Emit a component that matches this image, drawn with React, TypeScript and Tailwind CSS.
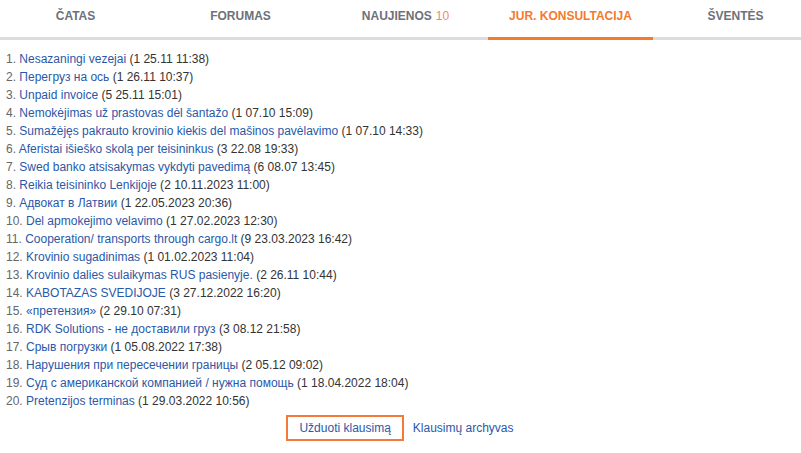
import { useState } from "react";

// ─── Data ────────────────────────────────────────────────────────────────────

const tabs = [
  { label: "ČATAS" },
  { label: "FORUMAS" },
  { label: "NAUJIENOS", badge: "10" },
  { label: "JUR. KONSULTACIJA" },
  { label: "ŠVENTĖS" },
];

const questions: [string, string][] = [
  ["Nesazaningi vezejai", "1 25.11 11:38"],
  ["Перегруз на ось", "1 26.11 10:37"],
  ["Unpaid invoice", "5 25.11 15:01"],
  ["Nemokėjimas už prastovas dėl šantažo", "1 07.10 15:09"],
  ["Sumažėjęs pakrauto krovinio kiekis del mašinos pavėlavimo", "1 07.10 14:33"],
  ["Aferistai išieško skolą per teisininkus", "3 22.08 19:33"],
  ["Swed banko atsisakymas vykdyti pavedimą", "6 08.07 13:45"],
  ["Reikia teisininko Lenkijoje", "2 10.11.2023 11:00"],
  ["Адвокат в Латвии", "1 22.05.2023 20:36"],
  ["Del apmokejimo velavimo", "1 27.02.2023 12:30"],
  ["Cooperation/ transports through cargo.lt", "9 23.03.2023 16:42"],
  ["Krovinio sugadinimas", "1 01.02.2023 11:04"],
  ["Krovinio dalies sulaikymas RUS pasienyje.", "2 26.11 10:44"],
  ["KABOTAZAS SVEDIJOJE", "3 27.12.2022 16:20"],
  ["«претензия»", "2 29.10 07:31"],
  ["RDK Solutions - не доставили груз", "3 08.12 21:58"],
  ["Срыв погрузки", "1 05.08.2022 17:38"],
  ["Нарушения при пересечении границы", "2 05.12 09:02"],
  ["Суд с американской компанией / нужна помощь", "1 18.04.2022 18:04"],
  ["Pretenzijos terminas", "1 29.03.2022 10:56"],
];

// ─── App ─────────────────────────────────────────────────────────────────────

export default function App() {
  const [active, setActive] = useState(3);

  return (
    <div
      className="w-[801px] h-[453px] overflow-hidden bg-white text-[12px]"
      style={{ fontFamily: '"Liberation Sans", Arial, sans-serif' }}
    >
      {/* Tabs */}
      <div className="border-b-[3px] border-[#dddddd]">
        <div className="flex w-[825px] -ml-[7px] -mb-[3px]">
          {tabs.map((t, i) => (
            <button
              key={t.label}
              onClick={() => setActive(i)}
              className={`w-[165px] h-[40px] pb-[5px] font-bold text-[12px] border-b-[3px] ${
                i === active
                  ? "text-[#f47a2c] border-[#f47a2c]"
                  : "text-[#6d7179] border-transparent"
              }`}
            >
              {t.label}
              {t.badge && <span className="ml-1 font-normal text-[#f5866a]">{t.badge}</span>}
            </button>
          ))}
        </div>
      </div>

      {/* Question list */}
      <ol className="pt-[10px] pl-[6px]">
        {questions.map(([title, meta], i) => (
          <li key={i} className="h-[18px] leading-[18px] text-[#333] whitespace-nowrap">
            <span className="text-[#666]">{i + 1}. </span>
            <a href="#" className="text-[#2a58a8]">{title}</a> ({meta})
          </li>
        ))}
      </ol>

      {/* Actions */}
      <div className="flex justify-center items-center gap-[9px] mt-[5px] ml-[-1px]">
        <a
          href="#"
          className="h-[26px] px-[11px] flex items-center border-2 border-[#f47a3a] text-[#2a58a8]"
        >
          Užduoti klausimą
        </a>
        <a href="#" className="text-[#2a58a8]">Klausimų archyvas</a>
      </div>
    </div>
  );
}
